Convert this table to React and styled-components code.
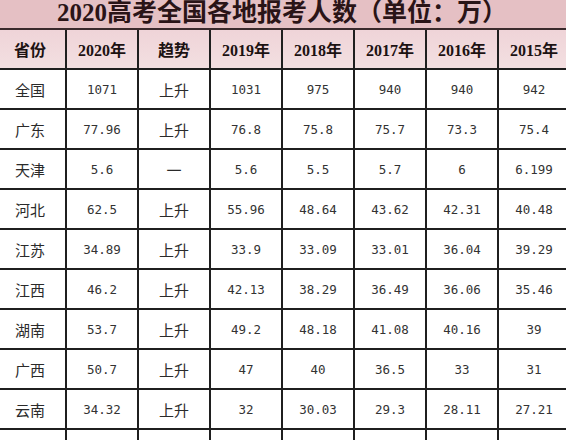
import styled, { createGlobalStyle } from "styled-components";

const GlobalStyle = createGlobalStyle`
  html, body {
    margin: 0;
    padding: 0;
    background: #ffffff;
    overflow: hidden;
  }
`;

const Page = styled.div`
  width: 566px;
  height: 440px;
  overflow: hidden;
  background: #fff;
`;

const Table = styled.table`
  border-collapse: collapse;
  table-layout: fixed;
  width: 576px;
  margin-left: -7px;
  color: #2b2b2b;
`;

const TitleRow = styled.tr`
  height: 29px;
`;

const TitleCell = styled.td`
  height: 26px;
  padding: 0 0 2px;
  overflow: hidden;
  background: #e5c0c4;
  color: #2a1417;
  font-family: "Liberation Serif", "Noto Sans CJK SC", serif;
  font-size: 25px;
  font-weight: 700;
  line-height: 26px;
  text-align: center;
  white-space: nowrap;
  border-bottom: 2px solid #3a2a2c;
`;

const Row = styled.tr`
  height: 40px;
`;

const HeadCell = styled.th`
  padding: 0;
  background: linear-gradient(#efd4d8, #f3dfe1);
  border: 2px solid #1f1f1f;
  border-top-color: #3a2a2c;
  color: #1c1212;
  font-family: "Liberation Serif", "Noto Sans CJK SC", serif;
  font-size: 16px;
  font-weight: 700;
  text-align: center;
  vertical-align: middle;
`;

const Cell = styled.td`
  padding: 0;
  border: 2px solid #1f1f1f;
  text-align: center;
  vertical-align: middle;
  white-space: nowrap;
  font-family: ${(p) =>
    p.$num
      ? `"DejaVu Sans Mono", "Liberation Mono", monospace`
      : `"Noto Sans CJK SC", sans-serif`};
  font-size: ${(p) => (p.$num ? "12.5px" : "15px")};
  color: ${(p) => (p.$num ? "#333" : "#2a2a2a")};
`;

const headers = [
  "省份",
  "2020年",
  "趋势",
  "2019年",
  "2018年",
  "2017年",
  "2016年",
  "2015年",
];

const rows = [
  ["全国", "1071", "上升", "1031", "975", "940", "940", "942"],
  ["广东", "77.96", "上升", "76.8", "75.8", "75.7", "73.3", "75.4"],
  ["天津", "5.6", "一", "5.6", "5.5", "5.7", "6", "6.199"],
  ["河北", "62.5", "上升", "55.96", "48.64", "43.62", "42.31", "40.48"],
  ["江苏", "34.89", "上升", "33.9", "33.09", "33.01", "36.04", "39.29"],
  ["江西", "46.2", "上升", "42.13", "38.29", "36.49", "36.06", "35.46"],
  ["湖南", "53.7", "上升", "49.2", "48.18", "41.08", "40.16", "39"],
  ["广西", "50.7", "上升", "47", "40", "36.5", "33", "31"],
  ["云南", "34.32", "上升", "32", "30.03", "29.3", "28.11", "27.21"],
  ["", "", "", "", "", "", "", ""],
];

const isNum = (v) => /^[\d.]+$/.test(v);

export default function App() {
  return (
    <Page>
      <GlobalStyle />
      <Table>
        <colgroup>
          {headers.map((h) => (
            <col key={h} style={{ width: 72 }} />
          ))}
        </colgroup>
        <tbody>
          <TitleRow>
            <TitleCell colSpan={8}>2020高考全国各地报考人数（单位：万）</TitleCell>
          </TitleRow>
          <Row>
            {headers.map((h) => (
              <HeadCell key={h}>{h}</HeadCell>
            ))}
          </Row>
          {rows.map((row, i) => (
            <Row key={i}>
              {row.map((v, j) => (
                <Cell key={j} $num={isNum(v)}>
                  {v}
                </Cell>
              ))}
            </Row>
          ))}
        </tbody>
      </Table>
    </Page>
  );
}
